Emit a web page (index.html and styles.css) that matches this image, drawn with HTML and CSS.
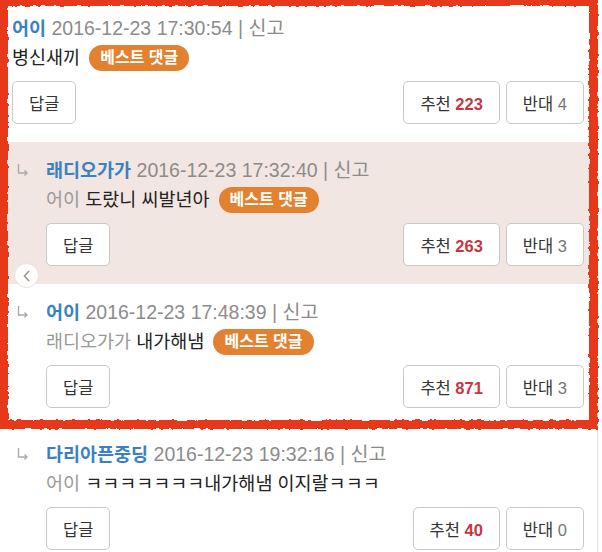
FILE: index.html
```html
<!DOCTYPE html>
<html>
<head>
    <title>댓글</title>
    <link rel="stylesheet" href="styles.css">
</head>
<body>
    <svg class="defs" width="0" height="0">
        <filter id="marker">
            <feTurbulence type="fractalNoise" baseFrequency="0.18" numOctaves="2" seed="3"/>
            <feDisplacementMap in="SourceGraphic" scale="4"/>
        </filter>
    </svg>

    <div class="comments">
        <div class="comment">
            <div class="body">
                <div class="head"><span class="nick">어이</span> <span class="meta">2016-12-23 17:30:54 | 신고</span></div>
                <div class="text">병신새끼 <span class="best">베스트 댓글</span></div>
                <div class="actions">
                    <button class="btn">답글</button>
                    <div class="votes">
                        <button class="btn">추천 <b class="up">223</b></button>
                        <button class="btn">반대 <span class="down">4</span></button>
                    </div>
                </div>
            </div>
        </div>

        <div class="comment reply hot">
            <div class="arrow"><svg width="12" height="12" viewBox="0 0 12 12"><path d="M1.5 0 V9 H10 M7.5 6.5 L10 9 L7.5 11.5" fill="none" stroke="#aaa" stroke-width="1.4"/></svg></div>
            <div class="body">
                <div class="head"><span class="nick">래디오가가</span> <span class="meta">2016-12-23 17:32:40 | 신고</span></div>
                <div class="text"><span class="to">어이</span> 도랐니 씨발년아 <span class="best">베스트 댓글</span></div>
                <div class="actions">
                    <button class="btn">답글</button>
                    <div class="votes">
                        <button class="btn">추천 <b class="up">263</b></button>
                        <button class="btn">반대 <span class="down">3</span></button>
                    </div>
                </div>
            </div>
        </div>

        <div class="comment reply">
            <div class="arrow"><svg width="12" height="12" viewBox="0 0 12 12"><path d="M1.5 0 V9 H10 M7.5 6.5 L10 9 L7.5 11.5" fill="none" stroke="#aaa" stroke-width="1.4"/></svg></div>
            <div class="body">
                <div class="head"><span class="nick">어이</span> <span class="meta">2016-12-23 17:48:39 | 신고</span></div>
                <div class="text"><span class="to">래디오가가</span> 내가해냄 <span class="best">베스트 댓글</span></div>
                <div class="actions">
                    <button class="btn">답글</button>
                    <div class="votes">
                        <button class="btn">추천 <b class="up">871</b></button>
                        <button class="btn">반대 <span class="down">3</span></button>
                    </div>
                </div>
            </div>
        </div>

        <div class="comment reply">
            <div class="arrow"><svg width="12" height="12" viewBox="0 0 12 12"><path d="M1.5 0 V9 H10 M7.5 6.5 L10 9 L7.5 11.5" fill="none" stroke="#aaa" stroke-width="1.4"/></svg></div>
            <div class="body">
                <div class="head"><span class="nick">다리아픈중딩</span> <span class="meta">2016-12-23 19:32:16 | 신고</span></div>
                <div class="text"><span class="to">어이</span> ㅋㅋㅋㅋㅋㅋㅋ내가해냄 이지랄ㅋㅋㅋ</div>
                <div class="actions">
                    <button class="btn">답글</button>
                    <div class="votes">
                        <button class="btn">추천 <b class="up">40</b></button>
                        <button class="btn">반대 <span class="down">0</span></button>
                    </div>
                </div>
            </div>
        </div>

        <!-- marker ring drawn over the best comments -->
        <div class="highlight"></div>

        <button class="prev"><svg width="10" height="12" viewBox="0 0 10 12"><path d="M7 1 L2.5 6 L7 11" fill="none" stroke="#999" stroke-width="1.6"/></svg></button>
    </div>
</body>
</html>
```

FILE: styles.css
```css
body {
    margin: 0;
    background: #fff;
    font-family: "Liberation Sans", "Noto Sans CJK KR", sans-serif;
    color: #222;
}
.defs {
    position: absolute;
}
.comments {
    position: relative;
    width: 597px;
    border-right: 1px solid #e2e2e2;
}
.comment {
    display: flex;
    padding: 13px 13px 18px 12px;
}
.comment.hot {
    background: #f1e6e1;
}
.arrow {
    width: 34px;
    flex: none;
    padding: 9px 0 0 5px;
    box-sizing: border-box;
}
.arrow svg {
    display: block;
}
.body {
    flex: 1;
}
.head {
    height: 30px;
    line-height: 30px;
    font-size: 19.5px;
    white-space: nowrap;
}
.nick {
    color: #3a81c3;
    font-weight: bold;
    font-size: 18.5px;
}
.meta {
    color: #8c8c8c;
}
.text {
    height: 30px;
    line-height: 30px;
    font-size: 18.5px;
    white-space: nowrap;
}
.to {
    color: #9a9a9a;
}
.best {
    display: inline-block;
    height: 26px;
    line-height: 26px;
    padding: 0 11px;
    margin-left: 4px;
    border-radius: 13px;
    background: #e2812f;
    color: #fff;
    font-size: 16px;
    font-weight: bold;
    vertical-align: 1px;
}
.actions {
    display: flex;
    justify-content: space-between;
    margin-top: 8px;
}
.votes {
    display: flex;
    gap: 6px;
}
.btn {
    height: 43px;
    padding: 0 16px;
    background: #fff;
    border: 1px solid #c9c9c9;
    border-radius: 5px;
    font-family: inherit;
    font-size: 16.5px;
    color: #333;
}
.up {
    color: #c7363f;
}
.down {
    color: #777;
}
.highlight {
    position: absolute;
    top: -3px;
    left: -1px;
    width: 599px;
    height: 432px;
    box-sizing: border-box;
    border: 9px solid #e8371c;
    filter: url(#marker);
    pointer-events: none;
}
.prev {
    position: absolute;
    left: 14px;
    top: 263px;
    width: 25px;
    height: 25px;
    padding: 0;
    border: 1px solid #e4e4e4;
    border-radius: 50%;
    background: rgba(255, 255, 255, 0.9);
    display: flex;
    align-items: center;
    justify-content: center;
}
```
